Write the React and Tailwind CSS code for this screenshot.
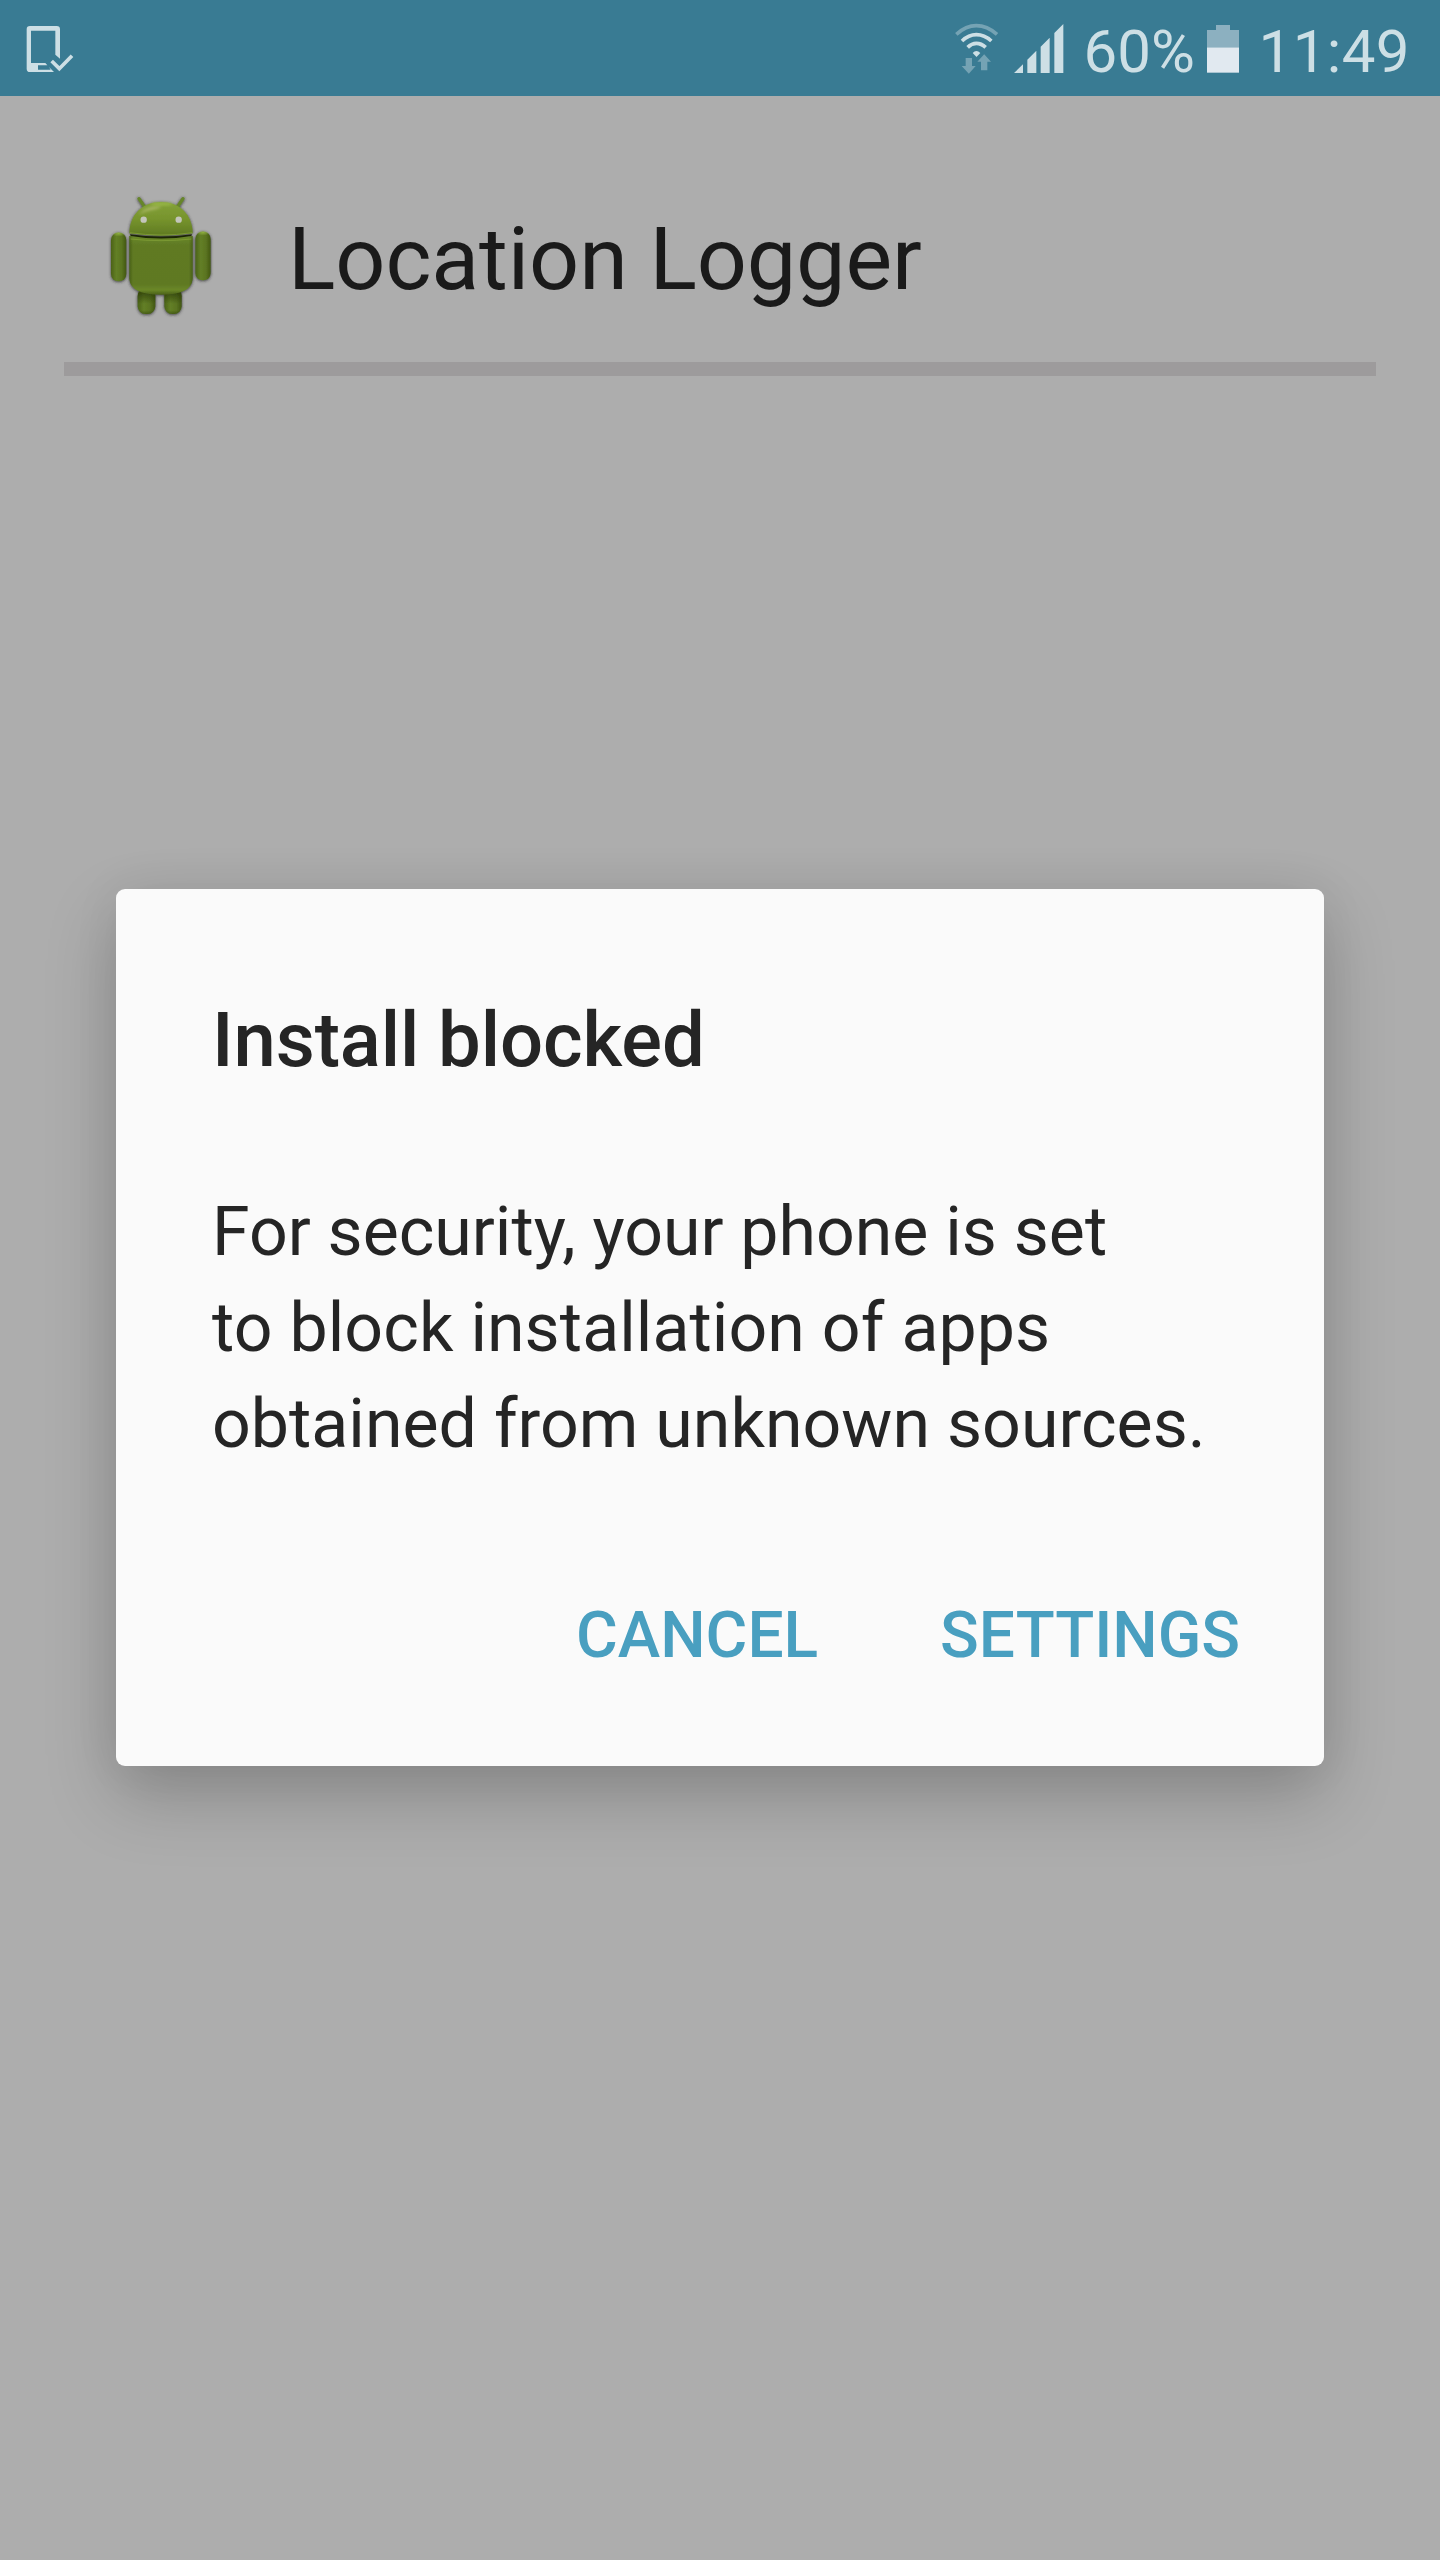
import React from "react";

function DeviceCheckIcon() {
  return (
    <svg className="block h-[96px] w-[80px]" viewBox="0 0 240 288" fill="none">
      <path fill="#cddfe5" fillRule="evenodd" d="M90 78H170Q180 78 180 88V176L166 164V92H93V189H136L142 196H114V209H152L147 201L162 216H90Q80 216 80 206V88Q80 78 90 78Z" />
      <path d="M155 183L178 206L216 167" stroke="#cddfe5" strokeWidth="11" />
    </svg>
  );
}

function WifiIcon() {
  return (
    <svg className="block h-[96px] w-[44px]" viewBox="75 0 132 288" fill="none">
      <path d="M79 103Q108 77 139 77Q171 77 201 103" stroke="#75a3b4" strokeWidth="11" />
      <path d="M96 123Q116 104 139 104Q163 104 184 123" stroke="#cddfe5" strokeWidth="11" />
      <path d="M113 142Q125 130 139 130Q154 130 167 142" stroke="#cddfe5" strokeWidth="11" />
      <path d="M128 159Q139 147 151 159L139.500 171Z" fill="#cddfe5" />
      <path d="M107 174H126V198H137L116.500 221L95 198H107ZM153 211V185H142L162.500 163L183 185H172V211Z" fill="#75a3b4" />
    </svg>
  );
}

function SignalIcon() {
  return (
    <svg className="block h-[96px] w-[50px]" viewBox="251 0 150 288" fill="#cddfe5">
      <path d="M251 219L278 193V219ZM291 219V179L318 152V219ZM331 219V140L358 113V219ZM372 219V99L399 72V219Z" />
    </svg>
  );
}

function BatteryIcon() {
  return (
    <svg className="block h-[96px] w-[32px]" viewBox="831 0 96 288">
      <path d="M858 75H900V90H927V142H831V90H858Z" fill="#8cb0c0" />
      <path d="M831 142H927V218H831Z" fill="#e1e9f0" />
    </svg>
  );
}

function AndroidRobot() {
  return (
    <svg className="block h-[150px] w-[140px]" viewBox="0 0 420 450">
      <defs>
        <linearGradient id="body" x1="0" y1="0" x2="0" y2="1">
          <stop offset="0" stopColor="#6b8a28" />
          <stop offset="0.15" stopColor="#607a24" />
          <stop offset="0.82" stopColor="#5f7923" />
          <stop offset="0.92" stopColor="#6a8728" />
          <stop offset="1" stopColor="#4a6018" />
        </linearGradient>
        <linearGradient id="edge" x1="0" y1="0" x2="1" y2="0">
          <stop offset="0" stopColor="#34480c" stopOpacity="0.5" />
          <stop offset="0.06" stopColor="#34480c" stopOpacity="0" />
          <stop offset="0.94" stopColor="#34480c" stopOpacity="0" />
          <stop offset="1" stopColor="#34480c" stopOpacity="0.5" />
        </linearGradient>
        <linearGradient id="limb" x1="0" y1="0" x2="1" y2="0">
          <stop offset="0" stopColor="#4b6318" />
          <stop offset="0.35" stopColor="#637f26" />
          <stop offset="0.7" stopColor="#5a7421" />
          <stop offset="1" stopColor="#425711" />
        </linearGradient>
        <radialGradient id="cap" cx="0.5" cy="0.2" r="0.6">
          <stop offset="0" stopColor="#93b443" stopOpacity="0.9" />
          <stop offset="1" stopColor="#93b443" stopOpacity="0" />
        </radialGradient>
        <linearGradient id="head" x1="0" y1="0" x2="0" y2="1">
          <stop offset="0" stopColor="#83a138" />
          <stop offset="0.5" stopColor="#77942d" />
          <stop offset="1" stopColor="#5f7a22" />
        </linearGradient>
        <linearGradient id="leg" x1="0" y1="0" x2="0" y2="1">
          <stop offset="0.2" stopColor="#2c3d08" stopOpacity="0.7" />
          <stop offset="0.6" stopColor="#2c3d08" stopOpacity="0" />
          <stop offset="0.85" stopColor="#2c3d08" stopOpacity="0" />
          <stop offset="1" stopColor="#2c3d08" stopOpacity="0.5" />
        </linearGradient>
        <filter id="shade" x="-20%" y="-20%" width="140%" height="140%">
          <feDropShadow dx="0" dy="2" stdDeviation="5" floodColor="#2a2a2a" floodOpacity="0.9" />
        </filter>
        <filter id="soft" x="-50%" y="-50%" width="200%" height="200%">
          <feGaussianBlur stdDeviation="4" />
        </filter>
      </defs>
      <g filter="url(#shade)">
        <path d="M147 56L165 82M279 56L261 82" stroke="#66852a" strokeWidth="10" strokeLinecap="round" />
        <rect x="143" y="325" width="53" height="77" rx="23" fill="url(#limb)" />
        <rect x="223" y="325" width="52" height="77" rx="23" fill="url(#limb)" />
        <rect x="143" y="325" width="53" height="77" rx="23" fill="url(#leg)" />
        <rect x="223" y="325" width="52" height="77" rx="23" fill="url(#leg)" />
        <rect x="63" y="158" width="46" height="146" rx="22" fill="url(#limb)" />
        <rect x="316" y="155" width="46" height="146" rx="22" fill="url(#limb)" />
        <path d="M118 168Q213 176 308 168V296Q304 344 213 344Q122 344 118 296Z" fill="url(#body)" />
        <path d="M118 168Q213 176 308 168V296Q304 344 213 344Q122 344 118 296Z" fill="url(#edge)" />
        <path d="M118 160C118 105 157 66 213 66C269 66 308 105 308 160Q213 174 118 160Z" fill="url(#head)" />
      </g>
      <path d="M120 163Q213 176 306 163L304 168Q213 183 122 168Z" fill="#1c2605" />
      <path d="M122 177Q213 187 304 177" stroke="#7b9933" strokeWidth="3" fill="none" />
      <path d="M119 158Q213 172 307 158" stroke="#7b9933" strokeWidth="3" fill="none" />
      <ellipse cx="86" cy="165" rx="17" ry="8" fill="url(#cap)" />
      <ellipse cx="339" cy="162" rx="17" ry="8" fill="url(#cap)" />
      <path d="M148 104C160 84 185 76 214 78C205 92 172 88 148 104Z" fill="#a6b562" filter="url(#soft)" />
      <ellipse cx="215" cy="72" rx="34" ry="4" fill="#9dbd4a" filter="url(#soft)" />
      <circle cx="161" cy="119" r="9.500" fill="#c3c5bb" />
      <circle cx="266" cy="119" r="9.500" fill="#c3c5bb" />
    </svg>
  );
}

function StatusBar() {
  return (
    <header className="flex h-24 items-start bg-[#397b93] text-[60px] leading-[71px] text-[#cddfe5]">
      <DeviceCheckIcon />
      <div className="ml-auto flex pr-[30px]">
        <WifiIcon />
        <div className="ml-[15px]">
          <SignalIcon />
        </div>
        <span className="mt-4 ml-5 w-[123px] whitespace-nowrap">60%</span>
        <BatteryIcon />
        <span className="mt-4 ml-5 tracking-[0.4px] whitespace-nowrap">11:49</span>
      </div>
    </header>
  );
}

function InstallDialog() {
  return (
    <section
      role="dialog"
      className="absolute top-[889px] left-[116px] h-[877px] w-[1208px] rounded-[9px] bg-[#fafafa] pt-[106px] pl-24 text-[#252525] shadow-[0_30px_70px_rgba(0,0,0,0.21),0_0_50px_rgba(0,0,0,0.06)]"
    >
      <h2 className="w-max text-[76px] leading-[90px] font-medium tracking-[-0.1px]">Install blocked</h2>
      <p className="mt-[99px] w-max text-[68px] leading-[96px]">
        For security, your phone is set
        <br />
        <span className="tracking-[0.08px]">to block installation of apps</span>
        <br />
        <span className="tracking-[0.035px]">obtained from unknown sources.</span>
      </p>
      <div className="mt-[126px] flex justify-end gap-[122px] pr-[84px] text-[64px] leading-[76px] font-medium text-[#499fc0]">
        <button>CANCEL</button>
        <button>SETTINGS</button>
      </div>
    </section>
  );
}

export default function App() {
  return (
    <main className="relative h-[2560px] w-[1440px] overflow-hidden bg-[#adadad] font-['Roboto',sans-serif]">
      <StatusBar />
      <div className="flex h-[266px] pt-[84px] pl-[90px]">
        <AndroidRobot />
        <h1 className="mt-[27px] ml-[58px] text-[88px] leading-[104px] tracking-[-0.1px] whitespace-nowrap text-[#1a1a1a]">
          Location Logger
        </h1>
      </div>
      <div className="mx-16 h-[14px] bg-[#9d9b9c]" />
      <InstallDialog />
    </main>
  );
}
